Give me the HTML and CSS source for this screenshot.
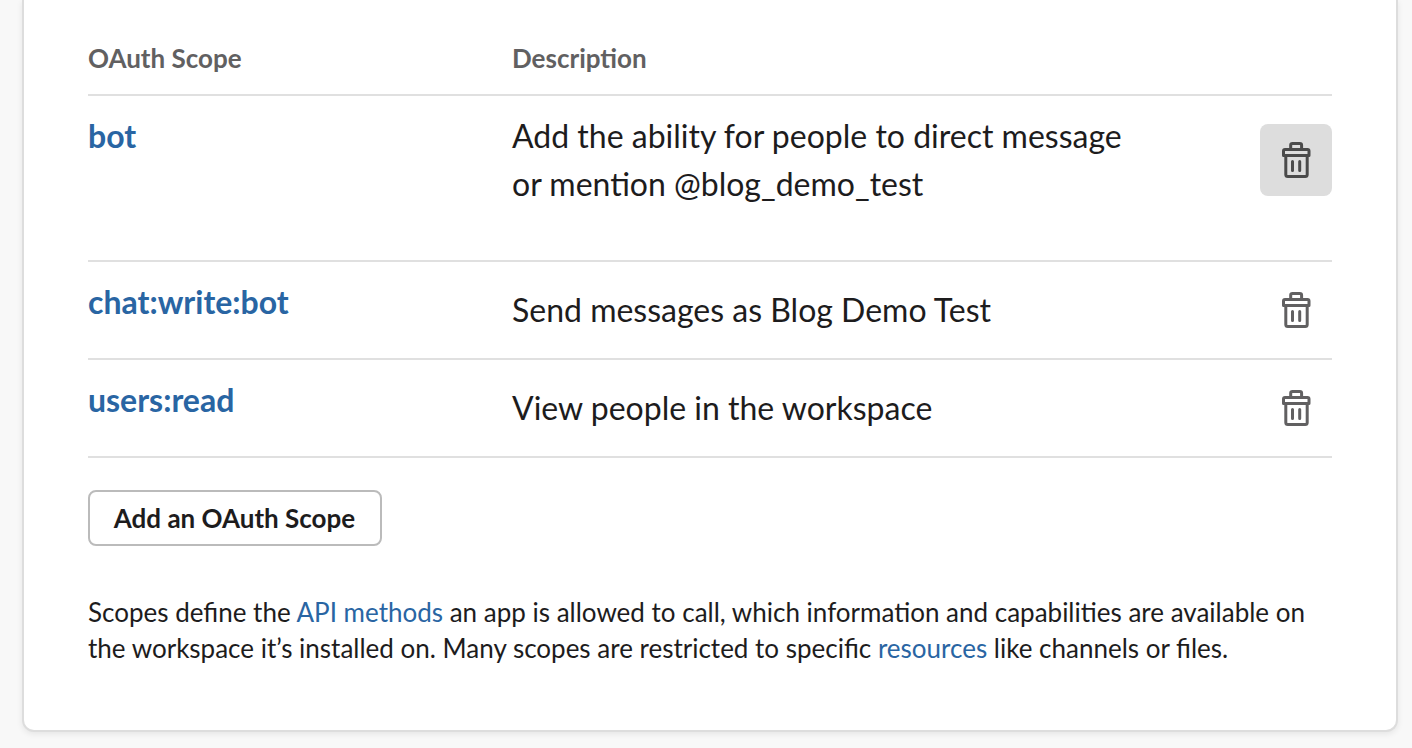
FILE: index.html
```html
<!DOCTYPE html>
<html lang="en">
<head>
<meta charset="utf-8">
<title>OAuth Scopes</title>
<link rel="stylesheet" href="styles.css">
</head>
<body>
<svg class="sprite" aria-hidden="true">
  <symbol id="trash" viewBox="0 0 32 40">
    <path d="M3.500 15.500V11Q3.500 9.500 5 9.500H27.500Q29 9.500 29 11V15.500ZM5.800 15.500V34.500Q5.800 36.500 7.800 36.500H25.200Q27.200 36.500 27.200 34.500V15.500M10.700 9.500V5.300Q10.700 3.500 12.500 3.500H19.800Q21.600 3.500 21.600 5.300V9.500M12.500 21.500V30.500M19.700 21.500V30.500"/>
  </symbol>
</svg>
<main class="card">
  <div class="row head"><span>OAuth Scope</span><span>Description</span></div>
  <div class="row tall">
    <a class="scope">bot</a>
    <p class="desc">Add the ability for people to direct message<br>or mention @blog_demo_test</p>
    <button class="delete active" aria-label="Delete"><svg class="icon"><use href="#trash"/></svg></button>
  </div>
  <div class="row">
    <a class="scope">chat:write:bot</a>
    <p class="desc">Send messages as Blog Demo Test</p>
    <button class="delete" aria-label="Delete"><svg class="icon"><use href="#trash"/></svg></button>
  </div>
  <div class="row">
    <a class="scope">users:read</a>
    <p class="desc">View people in the workspace</p>
    <button class="delete" aria-label="Delete"><svg class="icon"><use href="#trash"/></svg></button>
  </div>
  <button class="add">Add an OAuth Scope</button>
  <p class="note">Scopes define the <a>API methods</a> an app is allowed to call, which information and capabilities are available on<br>the workspace it’s installed on. Many scopes are restricted to specific <a>resources</a> like channels or files.</p>
</main>
</body>
</html>
```
FILE: styles.css
```css
* { box-sizing: border-box; }
body {
  margin: 0;
  height: 748px;
  overflow: hidden;
  background: #f8f8f8;
  color: #1d1c1d;
  font-family: Lato, sans-serif;
}
.sprite { display: none; }
.card {
  width: 1376px;
  height: 732px;
  margin-left: 22px;
  padding: 22px 64px 0;
  background: #fff;
  border: 2px solid #ddd;
  border-top: 0;
  border-radius: 0 0 12px 12px;
  box-shadow: 0 2px 6px rgba(0, 0, 0, .08);
}
.row {
  display: grid;
  grid-template-columns: 424px 1fr 72px;
  align-items: start;
  height: 98px;
  border-bottom: 2px solid #e0e0e0;
}
.row.head {
  height: 74px;
  align-items: center;
  color: #616061;
  font-size: 26px;
  font-weight: 700;
}
.row.tall { height: 166px; }
.scope {
  padding-top: 16px;
  color: #2965a3;
  font-size: 32px;
  line-height: 48px;
  font-weight: 700;
}
.desc {
  margin: 0;
  padding-top: 24px;
  font-size: 32px;
  line-height: 48px;
}
.tall .desc { padding-top: 16px; }
.delete {
  display: flex;
  align-items: center;
  justify-content: center;
  width: 72px;
  height: 72px;
  margin-top: 12px;
  padding: 0;
  border: 0;
  border-radius: 8px;
  background: none;
  color: #616061;
}
.delete.active { margin-top: 28px; background: #ddd; color: #4a4a4a; }
.icon {
  width: 32px;
  height: 40px;
  fill: none;
  stroke: currentColor;
  stroke-width: 3;
  stroke-linecap: round;
  stroke-linejoin: round;
}
.add {
  display: block;
  width: 294px;
  height: 56px;
  margin: 32px 0 0;
  padding: 0 1px 1px 0;
  border: 2px solid #bbb;
  border-radius: 8px;
  background: #fff;
  color: #1d1c1d;
  font: 700 26px Lato, sans-serif;
}
.note {
  margin: 48px 0 0;
  font-size: 26px;
  line-height: 36px;
  white-space: nowrap;
}
.note a { color: #2965a3; }
```
